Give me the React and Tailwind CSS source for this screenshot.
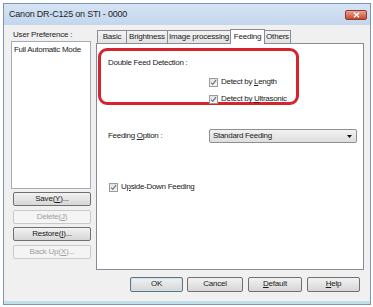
import React from 'react';

const font = { fontFamily: '"Liberation Sans", Arial, sans-serif' };

function Check() {
  return (
    <span className="w-[9px] h-[9px] border border-[#9a9b9c] bg-gradient-to-b from-[#e2e2e2] to-[#f6f6f6] flex items-center justify-center shrink-0">
      <svg width="7" height="7" viewBox="0 0 7 7">
        <path d="M1 3.6 L2.8 5.4 L6 1.2" fill="none" stroke="#6a7686" strokeWidth="1.2" />
      </svg>
    </span>
  );
}

function Btn({ children, disabled, className = '' }) {
  return (
    <div
      className={`h-[14px] flex items-center justify-center rounded-[2px] border text-[8px] tracking-[-0.2px] ${
        disabled
          ? 'border-[#c9c9c9] bg-[#f4f4f4] text-[#a0a0a0]'
          : 'border-[#707070] bg-gradient-to-b from-[#f2f2f2] to-[#d6d6d6] text-[#1a1a1a]'
      } ${className}`}
    >
      {children}
    </div>
  );
}

const tabs = [
  { t: 'Basic', w: 'w-[30px]' },
  { t: 'Brightness', w: 'w-[42px]' },
  { t: 'Image processing', w: 'w-[64px]' },
  { t: 'Feeding', w: 'w-[35px]' },
  { t: 'Others', w: 'w-[27px]' },
];

export default function App() {
  return (
    <div className="w-[373px] h-[307px] bg-white pt-[3px] pl-[3px] pr-[2px] pb-[2px]" style={font}>
      <div className="w-full h-full flex flex-col border border-[#7b97b8] bg-[#dce7f4]">
        {/* title bar */}
        <div className="h-[21px] flex items-center justify-between pl-[5px] pr-[3px] bg-gradient-to-b from-[#d6e4f4] to-[#c3d6ed]">
          <span className="text-[9px] text-[#1e1e1e] tracking-[-0.2px]">Canon DR-C125 on STI - 0000</span>
          <div className="w-[22px] h-[10px] rounded-[2px] border border-[#8c3a2e] bg-gradient-to-b from-[#e8a493] to-[#c7442c] flex items-center justify-center">
            <svg width="7" height="6" viewBox="0 0 7 6">
              <path d="M1 0.8 L6 5.2 M6 0.8 L1 5.2" stroke="#fff" strokeWidth="1.4" />
            </svg>
          </div>
        </div>
        {/* client */}
        <div className="flex-1 flex flex-col bg-[#f0f0f0] border-b-[3px] border-[#bfe0ea]">
          <div className="flex-1 flex gap-[5px] pl-[7px] pr-[6px] pt-[3px]">
            {/* left column */}
            <div className="w-[80px] flex flex-col">
              <div className="h-[13px] flex items-center pl-[2px] text-[8px] text-[#222] tracking-[-0.2px]">User Preference :</div>
              <div className="h-[148px] border border-[#a5acb5] bg-white px-[2px] py-[2px] text-[8px] text-[#222] tracking-[-0.3px]">
                Full Automatic Mode
              </div>
              <div className="flex flex-col gap-[3.5px] mt-[3px] pl-[2px]">
                <Btn>Save(<u>Y</u>)...</Btn>
                <Btn disabled>Delete(<u>J</u>)</Btn>
                <Btn>Restore(<u>I</u>)...</Btn>
                <Btn disabled>Back Up(<u>X</u>)...</Btn>
              </div>
            </div>
            {/* tabs area */}
            <div className="flex-1 flex flex-col">
              <div className="h-[15px] flex items-end pl-[1px]">
                {tabs.map(({ t, w }) => {
                  const sel = t === 'Feeding';
                  return (
                    <div
                      key={t}
                      className={`${w} text-[8px] text-[#222] tracking-[-0.2px] border border-[#898c95] border-b-0 -mr-[1px] flex items-center justify-center ${
                        sel
                          ? 'h-[15px] bg-white relative z-10 -mb-[1px]'
                          : 'h-[13px] bg-gradient-to-b from-[#f3f3f3] to-[#e3e3e3]'
                      }`}
                    >
                      {t}
                    </div>
                  );
                })}
              </div>
              <div className="h-[227px] border border-[#898c95] bg-white flex flex-col pl-[1px] pr-[6px] pt-[4px]">
                <div className="w-[201px] h-[57px] border-[3px] border-[#d7242c] rounded-[9px] flex flex-col pl-[7px] pt-[6px]">
                  <div className="text-[8px] text-[#222] tracking-[-0.3px]">Double Feed Detection :</div>
                  <div className="flex flex-col gap-[5px] pl-[101px] mt-[7px] text-[8px] text-[#222] tracking-[-0.3px]">
                    <div className="flex items-center gap-[3px]">
                      <Check />
                      <span>Detect by <u>L</u>ength</span>
                    </div>
                    <div className="flex items-center gap-[3px]">
                      <Check />
                      <span>Detect by <u>U</u>ltrasonic</span>
                    </div>
                  </div>
                </div>
                <div className="flex items-center mt-[24px] pl-[10px]">
                  <span className="w-[101px] text-[8px] text-[#222] tracking-[-0.3px]">Feeding <u>O</u>ption :</span>
                  <div className="flex-1 h-[14px] border border-[#8e8f8f] rounded-[2px] bg-gradient-to-b from-[#f2f2f2] to-[#dedede] flex items-center justify-between pl-[3px] pr-[4px]">
                    <span className="text-[8px] text-[#222] tracking-[-0.3px]">Standard Feeding</span>
                    <svg width="5" height="3" viewBox="0 0 5 3">
                      <path d="M0 0 H5 L2.5 3 Z" fill="#111" />
                    </svg>
                  </div>
                </div>
                <div className="flex items-center gap-[3px] mt-[38px] pl-[11px] text-[8px] text-[#222] tracking-[-0.3px]">
                  <Check />
                  <span>U<u>p</u>side-Down Feeding</span>
                </div>
              </div>
            </div>
          </div>
          {/* bottom buttons */}
          <div className="h-[31px] flex items-center justify-end pr-[10px] pb-[3px]">
            <Btn className="w-[53px] h-[15px] border-[#3c7fb1] shadow-[inset_0_0_0_1px_#bde4fb]">OK</Btn>
            <Btn className="w-[56px] h-[15px] ml-[4px]">Cancel</Btn>
            <Btn className="w-[54px] h-[15px] ml-[5px]"><u>D</u>efault</Btn>
            <Btn className="w-[53px] h-[15px] ml-[5px]"><u>H</u>elp</Btn>
          </div>
        </div>
      </div>
    </div>
  );
}
